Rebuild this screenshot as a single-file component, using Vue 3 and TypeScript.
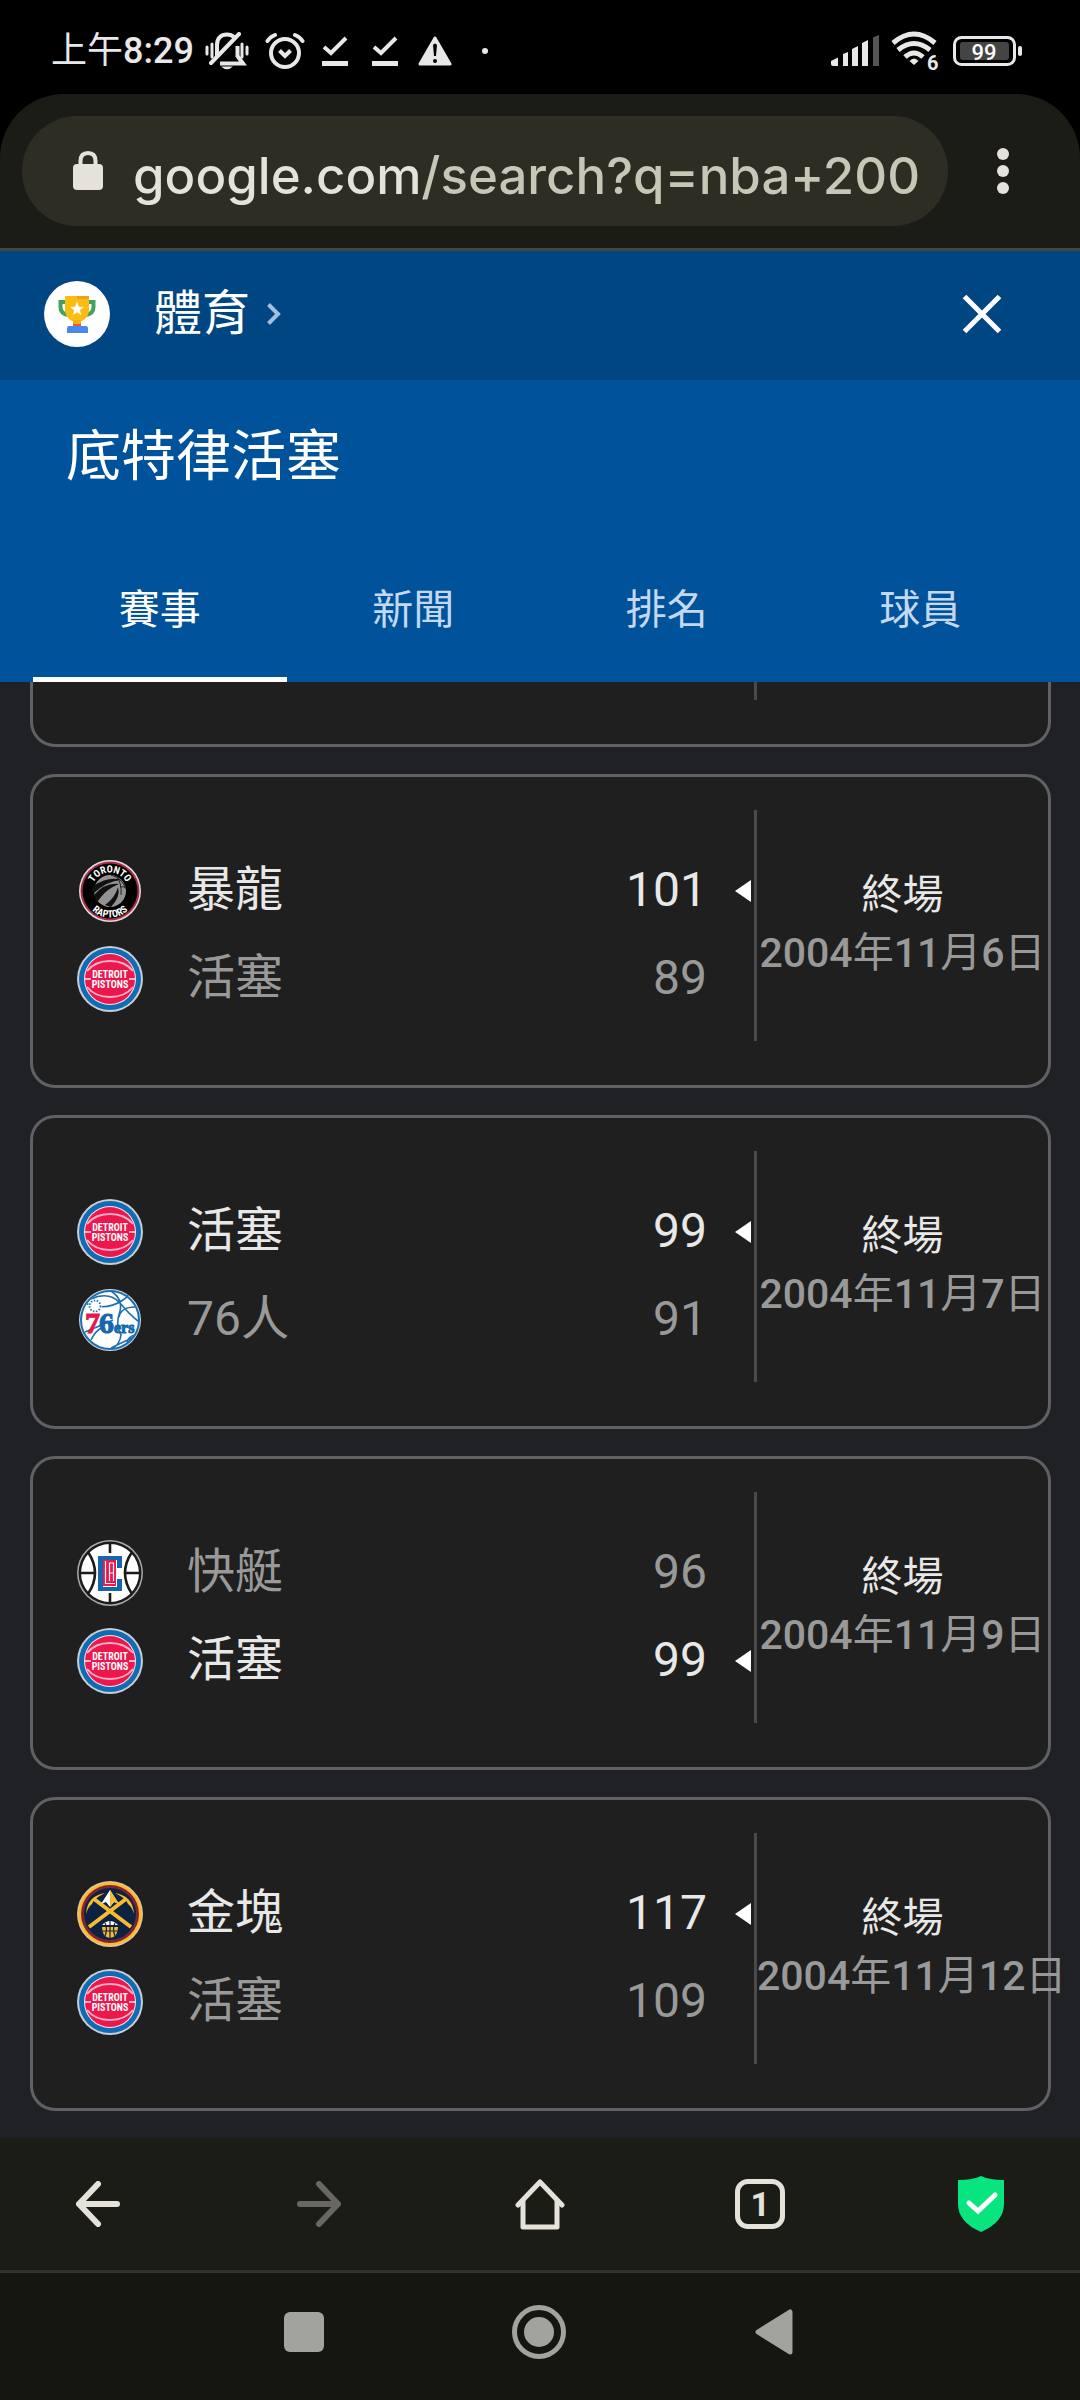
<script setup lang="ts">
import { ref } from 'vue'

type TeamId = 'raptors' | 'pistons' | 'sixers' | 'clippers' | 'nuggets'

interface Side {
  team: TeamId
  name: string
  score: number
}

interface Match {
  sides: Side[]
  status: string
  date: string
}

const url = ref('google.com/search?q=nba+200')
const tabs = ['賽事', '新聞', '排名', '球員']
const activeTab = ref(0)

const matches: Match[] = [
  {
    sides: [
      { team: 'raptors', name: '暴龍', score: 101 },
      { team: 'pistons', name: '活塞', score: 89 },
    ],
    status: '終場',
    date: '2004年11月6日',
  },
  {
    sides: [
      { team: 'pistons', name: '活塞', score: 99 },
      { team: 'sixers', name: '76人', score: 91 },
    ],
    status: '終場',
    date: '2004年11月7日',
  },
  {
    sides: [
      { team: 'clippers', name: '快艇', score: 96 },
      { team: 'pistons', name: '活塞', score: 99 },
    ],
    status: '終場',
    date: '2004年11月9日',
  },
  {
    sides: [
      { team: 'nuggets', name: '金塊', score: 117 },
      { team: 'pistons', name: '活塞', score: 109 },
    ],
    status: '終場',
    date: '2004年11月12日',
  },
]

const isWinner = (match: Match, side: Side): boolean =>
  match.sides.every((other) => other.score <= side.score)

// Splits a date into runs of digits and runs of characters.
const dateParts = (date: string): string[] => date.match(/\d+|\D+/g) ?? []
const isNumber = (part: string): boolean => /^\d/.test(part)
</script>

<template>
  <div class="screen">
    <header class="status">
      <span class="clock">上午<span class="clock-digits">8:29</span></span>
      <span class="status-slot wide">
        <svg width="44" height="38" viewBox="0 0 44 38" fill="none" stroke="#e8e8e8">
          <path d="M2 15v7M7 12v13M37 12v13M42 15v7" stroke-width="3" stroke-linecap="round" />
          <path d="M12 24V13C12 6 16 2.500 22 2.500C25 2.500 27 3.200 29 5M32.500 14V24L38 31.500H15" stroke-width="4" />
          <path d="M6 31L34 2" stroke-width="4" stroke-linecap="round" />
          <path d="M16 34.500H28Q22 40 16 34.500Z" fill="#e8e8e8" stroke="none" />
        </svg>
      </span>
      <span class="status-slot">
        <svg width="40" height="38" viewBox="0 0 40 38" fill="none" stroke="#e8e8e8" stroke-width="4">
          <circle cx="20" cy="21" r="14" />
          <path d="M2.500 9Q5 5 10 3M37.500 9Q35 5 30 3" stroke-linecap="round" />
          <path d="M14.500 18.500L20 24L25.500 18.500" />
        </svg>
      </span>
      <span v-for="n in 2" :key="n" class="status-slot">
        <svg width="26" height="30" viewBox="0 0 26 30" fill="none" stroke="#e8e8e8">
          <path d="M2 11L9 17L24 2" stroke-width="4" />
          <path d="M0 27.500H26" stroke-width="5" />
        </svg>
      </span>
      <span class="status-slot">
        <svg width="34" height="30" viewBox="0 0 34 30">
          <path d="M17 2L32 28H2Z" fill="#e8e8e8" stroke="#e8e8e8" stroke-width="3" stroke-linejoin="round" />
          <path d="M15 9Q17 6 19 9L18 20H16Z" fill="#000" />
          <circle cx="17" cy="25" r="2" fill="#000" />
        </svg>
      </span>
      <span class="status-slot">
        <svg width="6" height="6" viewBox="0 0 6 6"><circle cx="3" cy="3" r="3" fill="#e8e8e8" /></svg>
      </span>
      <span class="status-right">
        <svg width="48" height="32" viewBox="0 0 48 32" fill="#e8e8e8">
          <path d="M0 26L7 22.500V31H2Q0 31 0 29Z" />
          <path d="M12 19L17 17V31H12Z" />
          <path d="M21 14L27 11V31H21Z" />
          <path d="M31 8L37 5V31H31Z" />
          <path d="M42 2.500L48 0V31H42Z" fill="#555" />
        </svg>
        <svg width="50" height="56" viewBox="0 -8 50 56" fill="none" stroke="#e8e8e8" stroke-width="5">
          <path d="M2 12Q23 -6 44 12" />
          <path d="M7 19Q23 6 39 19" />
          <path d="M14 26Q23 18 32 26" />
          <path d="M23 34L18.500 30Q23 25 27.500 30Z" fill="#e8e8e8" stroke="none" />
          <circle cx="42" cy="34" r="8" fill="#000" stroke="none" />
          <text x="36" y="39" class="wifi-text">6</text>
        </svg>
        <svg width="69" height="30" viewBox="0 0 69 30">
          <rect x="1.500" y="1.500" width="60" height="27" rx="7" fill="none" stroke="#e8e8e8" stroke-width="3" />
          <rect x="7" y="6" width="49" height="18" rx="3" fill="#444" />
          <rect x="65" y="10" width="4" height="10" rx="2" fill="#e8e8e8" />
          <text x="31" y="24" text-anchor="middle" class="battery-text">99</text>
        </svg>
      </span>
    </header>

    <div class="browser">
      <label class="omnibox">
        <svg width="30" height="40" viewBox="0 0 30 40">
          <path d="M7.500 15V10Q7.500 2 15 2Q22.500 2 22.500 10V15" fill="none" stroke="#e4e2d9" stroke-width="4" />
          <rect y="13" width="30" height="26" rx="4" fill="#e4e2d9" />
        </svg>
        <input v-model="url" class="url" type="text" aria-label="網址" />
      </label>
      <button class="menu" type="button" aria-label="選單">
        <svg width="12" height="46" viewBox="0 0 12 46" fill="#e4e2d9">
          <circle cx="6" cy="6" r="6" />
          <circle cx="6" cy="23" r="6" />
          <circle cx="6" cy="40" r="6" />
        </svg>
      </button>
    </div>

    <div class="sports-bar">
      <svg width="66" height="66" viewBox="0 0 66 66">
        <circle cx="33" cy="33" r="33" fill="#fff" />
        <path d="M22 21H16.500V26Q16.500 32.500 24 34M44 21H49.500V26Q49.500 32.500 42 34" fill="none" stroke="#41a45c" stroke-width="4" />
        <path d="M21 15H45V29Q45 36 38 40H28Q21 36 21 29Z" fill="#fbbc13" />
        <path d="M33 15H45V18H33Z" fill="#f4a010" />
        <path d="M29 39H37V46H29Z" fill="#fbab10" />
        <path d="M29 43H37V46H29Z" fill="#ea5a35" />
        <path d="M25 45H42Q44 45 44 48V52H23V48Q23 45 25 45Z" fill="#4a88ef" />
        <path d="M33 20.500L34.900 25.800L39.700 25.900L35.900 29.200L37.200 34L33 31.300L28.800 34L30.100 29.200L26.300 25.900L31.100 25.800Z" fill="#fff" />
      </svg>
      <a class="sports-link" href="#">
        體育
        <svg width="16" height="24" viewBox="0 0 16 24" fill="none" stroke="#a3bfdc" stroke-width="4">
          <path d="M2.500 2.500L12 12L2.500 21.500" />
        </svg>
      </a>
      <button class="close" type="button" aria-label="關閉">
        <svg width="40" height="40" viewBox="0 0 40 40" stroke="#fff" stroke-width="5">
          <path d="M2.500 2.500L37.500 37.500M37.500 2.500L2.500 37.500" />
        </svg>
      </button>
    </div>

    <div class="team-head">
      <h1>底特律活塞</h1>
      <nav class="tabs" role="tablist">
        <button
          v-for="(tab, i) in tabs"
          :key="tab"
          type="button"
          role="tab"
          :aria-selected="i === activeTab"
          :class="['tab', { active: i === activeTab }]"
          @click="activeTab = i"
        >
          {{ tab }}
        </button>
      </nav>
    </div>

    <main class="list">
      <div class="card cut">
        <div class="sides"></div>
        <div class="info"></div>
      </div>

      <article v-for="match in matches" :key="match.date" class="card">
        <div class="sides">
          <div
            v-for="side in match.sides"
            :key="side.team"
            :class="['side', { winner: isWinner(match, side) }]"
          >
            <svg v-if="side.team === 'pistons'" width="66" height="66" viewBox="0 0 66 66">
              <circle cx="33" cy="33" r="33" fill="#c9ced2" />
              <circle cx="33" cy="33" r="31" fill="#0f6bb3" />
              <circle cx="33" cy="33" r="26" fill="#f0e8f0" />
              <circle cx="33" cy="33" r="25" fill="#ed174c" />
              <path d="M10 25Q18 15 33 15Q48 15 56 25M10 41Q18 51 33 51Q48 51 56 41" fill="none" stroke="#f7b5c6" stroke-width="2" />
              <path d="M8 33H14M52 33H58" stroke="#f7b5c6" stroke-width="2" />
              <text x="33" y="32" class="mark pistons-text">DETROIT</text>
              <text x="33" y="42" class="mark pistons-text">PISTONS</text>
            </svg>

            <svg v-else-if="side.team === 'raptors'" width="66" height="66" viewBox="0 0 66 66">
              <circle cx="33" cy="33" r="31" fill="#e3dcde" />
              <circle cx="33" cy="33" r="29.500" fill="#a8304a" />
              <circle cx="33" cy="33" r="27.500" fill="#000" />
              <circle cx="33" cy="33" r="16" fill="#929292" />
              <path d="M16 28Q32 18 44 22Q30 23 17 35L15 33ZM17 37Q28 24 42 26Q30 31 24 39Q20 45 19 44ZM28 47Q38 40 41 29Q44 38 34 49Z" fill="#111" />
              <path d="M40 19Q45 26 44 37M34 17Q45 20 49 31M43 29Q47 28 49 30" fill="none" stroke="#222" stroke-width="1" />
              <path id="raptors-top" d="M14.500 33A18.500 18.500 0 0 1 51.500 33" fill="none" />
              <path id="raptors-bottom" d="M6.500 33A26.500 26.500 0 0 0 59.500 33" fill="none" />
              <text class="mark raptors-text"><textPath href="#raptors-top" startOffset="50%">TORONTO</textPath></text>
              <text class="mark raptors-text"><textPath href="#raptors-bottom" startOffset="50%">RAPTORS</textPath></text>
            </svg>

            <svg v-else-if="side.team === 'sixers'" width="66" height="66" viewBox="0 0 66 66">
              <circle cx="33" cy="33" r="31" fill="#d5dce2" />
              <circle cx="33" cy="33" r="29" fill="#fff" stroke="#1c6fb0" stroke-width="2" />
              <path d="M14 12Q32 4 43 16Q53 28 61 34M10 17Q30 24 46 13Q52 9 50 8M34 4Q46 12 43 24Q38 38 44 48Q43 57 35 62M58 20Q44 20 42 30M8 45Q25 38 36 33M14 53Q18 44 26 40M34 61Q44 56 55 51M58 48Q52 49 50 55" fill="none" stroke="#1c6fb0" stroke-width="1.600" />
              <circle cx="18" cy="19" r="7" fill="#fff" />
              <circle cx="18" cy="19" r="5.500" fill="none" stroke="#1c6fb0" stroke-width="1.800" stroke-dasharray="1.500 1.500" />
              <text x="8" y="46" class="sixers-text red">7</text>
              <text x="22" y="46" class="sixers-text">6</text>
              <text x="37" y="46" class="sixers-text small">ers</text>
            </svg>

            <svg v-else-if="side.team === 'clippers'" width="66" height="66" viewBox="0 0 66 66">
              <circle cx="33" cy="33" r="33" fill="#a9abad" />
              <circle cx="33" cy="33" r="31.500" fill="#1b1b1b" />
              <circle cx="33" cy="33" r="29" fill="#fff" />
              <path d="M33 3V13M33 53V63M4 33H18M48 33H62M11 12Q25 33 11 54M55 12Q41 33 55 54" fill="none" stroke="#1b1b1b" stroke-width="2.600" />
              <path d="M45 28V16H21V51H45V39H40V47H26V20H40V28Z" fill="#1467ae" />
              <path d="M26 20H39V46H26Z" fill="#ed174c" />
              <path d="M28.500 21V43.500H38M32.500 41V23H36.500V41M32.500 33H36.500" fill="none" stroke="#fff" stroke-width="1.200" />
            </svg>

            <svg v-else width="66" height="66" viewBox="0 0 66 66">
              <circle cx="33" cy="33" r="33" fill="#e0c899" />
              <circle cx="33" cy="33" r="31.500" fill="#fdb927" />
              <circle cx="33" cy="33" r="29" fill="#7d2434" />
              <circle cx="33" cy="33" r="26" fill="#0d2240" />
              <path d="M12 46L49 18M54 46L17 18" stroke="#f4bb33" stroke-width="4" />
              <path d="M9 33Q10 15 28 12Q16 18 15 23Q11 26 9 33ZM57 33Q56 15 38 12Q50 18 51 23Q55 26 57 33Z" fill="#f4bb33" />
              <path d="M33 9L24 23L29 21L33 26L37 21L42 23Z" fill="#fff" />
              <path d="M33 9V26L37 21L42 23Z" fill="#f4bb33" />
              <path d="M25 44Q33 36 41 44Z" fill="#fff" />
              <path d="M25 46H41Q41 56 33 57Q25 56 25 46Z" fill="#f4bb33" />
              <path d="M33 39V57M25 50H41M28 42Q31 48 28 55M38 42Q35 48 38 55" fill="none" stroke="#0d2240" stroke-width="1.200" />
            </svg>

            <span class="name">{{ side.name }}</span>
            <span class="score">{{ side.score }}</span>
            <svg class="arrow" width="16" height="22" viewBox="0 0 16 22">
              <path v-if="isWinner(match, side)" d="M16 0V22L0 11Z" fill="#fff" />
            </svg>
          </div>
        </div>
        <div class="info">
          <span class="result">{{ match.status }}</span>
          <time class="date"
            ><span
              v-for="(part, i) in dateParts(match.date)"
              :key="i"
              :class="{ digits: isNumber(part) }"
              >{{ part }}</span
            ></time
          >
        </div>
      </article>
    </main>

    <nav class="toolbar">
      <button type="button" aria-label="上一頁">
        <svg width="44" height="46" viewBox="0 0 44 46" fill="none" stroke="#e4e2d9" stroke-width="6" stroke-linecap="round" stroke-linejoin="round">
          <path d="M22 3L3 23L22 43M3 23H41" />
        </svg>
      </button>
      <button type="button" aria-label="下一頁" disabled>
        <svg width="44" height="46" viewBox="0 0 44 46" fill="none" stroke="#686761" stroke-width="6" stroke-linecap="round" stroke-linejoin="round">
          <path d="M22 3L41 23L22 43M41 23H3" />
        </svg>
      </button>
      <button type="button" aria-label="首頁">
        <svg width="50" height="52" viewBox="0 0 50 52" fill="none" stroke="#e4e2d9" stroke-width="5" stroke-linecap="round" stroke-linejoin="round">
          <path d="M3 27L25 4L47 27" />
          <path d="M8 23V49H42V23" />
        </svg>
      </button>
      <button type="button" aria-label="分頁" class="tab-count"><span>1</span></button>
      <button type="button" aria-label="安全">
        <svg width="48" height="56" viewBox="0 0 48 56">
          <path d="M24 0Q32 4 47 4V28Q47 46 24 56Q1 46 1 28V4Q16 4 24 0Z" fill="#08e57f" />
          <path d="M12 27L21 35L38 19" fill="none" stroke="#fff" stroke-width="5" stroke-linecap="round" />
        </svg>
      </button>
    </nav>

    <nav class="system-nav">
      <button type="button" aria-label="最近使用">
        <svg width="40" height="40" viewBox="0 0 40 40"><rect width="40" height="40" rx="6" fill="#a2a29f" /></svg>
      </button>
      <button type="button" aria-label="主畫面">
        <svg width="54" height="54" viewBox="0 0 54 54">
          <circle cx="27" cy="27" r="24.500" fill="none" stroke="#a2a29f" stroke-width="5" />
          <circle cx="27" cy="27" r="15" fill="#a2a29f" />
        </svg>
      </button>
      <button type="button" aria-label="返回">
        <svg width="38" height="46" viewBox="0 0 38 46">
          <path d="M3 23L35 3V43Z" fill="#a2a29f" stroke="#a2a29f" stroke-width="5" stroke-linejoin="round" />
        </svg>
      </button>
    </nav>
  </div>
</template>

<style>
body {
  margin: 0;
  background: #000;
}
</style>

<style scoped>
.screen {
  display: flex;
  flex-direction: column;
  min-height: 100vh;
  overflow: hidden;
  background: #202124;
  color: #e8e8e8;
  font-family: Roboto, 'Noto Sans CJK TC', sans-serif;
}

svg {
  display: block;
  flex: none;
}

button {
  display: flex;
  align-items: center;
  justify-content: center;
  padding: 0;
  border: 0;
  background: none;
  color: inherit;
  font: inherit;
}

.status {
  display: flex;
  align-items: center;
  box-sizing: border-box;
  height: 94px;
  padding: 8px 58px 0 51px;
  background: #000;
}

.clock {
  font-size: 36px;
  line-height: 48px;
  white-space: nowrap;
}

.clock-digits {
  font-weight: 500;
}

.status-slot {
  display: flex;
  flex: none;
  justify-content: center;
  width: 50px;
}

.status-slot.wide {
  width: 66px;
}

.status-right {
  display: flex;
  align-items: center;
  gap: 12px;
  margin-left: auto;
}

.wifi-text {
  fill: #e8e8e8;
  stroke: none;
  font-size: 20px;
  font-weight: 700;
}

.battery-text {
  fill: #fff;
  font-size: 22px;
  font-weight: 500;
}

.browser {
  position: relative;
  display: flex;
  align-items: center;
  box-sizing: border-box;
  height: 157px;
  padding-left: 22px;
  border-bottom: 3px solid #45453c;
  background: #000;
  isolation: isolate;
}

.browser::before {
  content: '';
  position: absolute;
  inset: 0;
  z-index: -1;
  border-radius: 64px 64px 0 0;
  background: #1c1c17;
}

.omnibox {
  display: flex;
  flex: 1;
  align-items: center;
  gap: 30px;
  min-width: 0;
  box-sizing: border-box;
  height: 110px;
  padding: 0 22px 0 51px;
  border-radius: 55px;
  background: #2e2d23;
}

/* The host name is brighter than the rest of the address. */
.url {
  flex: 1;
  min-width: 0;
  height: 72px;
  padding: 8px 0 0;
  border: 0;
  outline: 0;
  background: linear-gradient(90deg, #e4e2d9 291px, #c8c6b7 291px);
  background-clip: text;
  -webkit-background-clip: text;
  color: transparent;
  font-family: Inter, sans-serif;
  font-size: 51px;
  font-weight: 500;
}

.menu {
  width: 132px;
  height: 110px;
  padding-right: 22px;
}

.sports-bar {
  display: flex;
  align-items: center;
  box-sizing: border-box;
  height: 129px;
  padding: 0 43px 3px 44px;
  background: #004682;
}

.sports-link {
  display: flex;
  align-items: center;
  gap: 16px;
  margin-left: 44px;
  color: #fff;
  font-size: 48px;
  line-height: 72px;
  text-decoration: none;
}

.close {
  width: 110px;
  height: 110px;
  margin-left: auto;
}

.team-head {
  padding: 36px 33px 0;
  background: #00529b;
  color: #fff;
}

h1 {
  margin: 0 33px;
  font-size: 55px;
  font-weight: 400;
  line-height: 80px;
}

.tabs {
  display: flex;
  margin-top: 42px;
}

.tab {
  flex: 1;
  box-sizing: border-box;
  height: 144px;
  border-top: 5px solid transparent;
  border-bottom: 5px solid transparent;
  color: #c3d9f1;
  font-size: 41px;
  line-height: 60px;
}

.tab.active {
  border-bottom-color: #fff;
  color: #fff;
}

.list {
  display: flex;
  flex: 1;
  flex-direction: column;
  gap: 27px;
  padding: 0 29px 27px 30px;
}

.card {
  display: flex;
  border: 3px solid #5f6165;
  border-radius: 25px;
  background: #1f1f1f;
}

.card.cut {
  border-top: 0;
  border-top-left-radius: 0;
  border-top-right-radius: 0;
}

.sides {
  flex: 1;
  min-width: 0;
  padding: 70px 3px 62px 44px;
}

.cut .sides {
  padding: 0;
}

.side {
  display: flex;
  align-items: center;
  height: 88px;
  color: #999;
  font-size: 48px;
  line-height: 72px;
}

.side.winner {
  color: #e8e8e8;
}

.name {
  flex: 1;
  padding: 0 0 2px 44px;
}

.score {
  padding: 0 28px 2px 0;
}

.info {
  display: flex;
  flex-direction: column;
  align-items: center;
  box-sizing: border-box;
  width: 294px;
  margin: 33px 0 44px;
  padding-top: 56px;
  border-left: 3px solid #4a4a4a;
  font-size: 41px;
  line-height: 58px;
  white-space: nowrap;
}

.cut .info {
  height: 18px;
  margin-top: 0;
  padding: 0;
}

.date {
  align-self: flex-start;
  min-width: 100%;
  color: #999;
  text-align: center;
}

.digits {
  font-weight: 500;
}

.mark {
  fill: #fff;
  text-anchor: middle;
  font-family: 'Liberation Sans Narrow', 'Roboto Condensed', Roboto, sans-serif;
  font-weight: 700;
}

.pistons-text {
  font-size: 10px;
}

.raptors-text {
  font-size: 10px;
}

.sixers-text {
  fill: #1467ae;
  stroke: #1467ae;
  stroke-width: 1;
  font-family: 'Liberation Serif', serif;
  font-size: 30px;
  font-weight: 700;
}

.sixers-text.red {
  fill: #e5174c;
  stroke: #e5174c;
}

.sixers-text.small {
  font-size: 16px;
}

.toolbar {
  display: flex;
  align-items: center;
  justify-content: space-between;
  box-sizing: border-box;
  height: 135px;
  padding: 0 44px 0 43px;
  border-bottom: 3px solid #33332e;
  background: #1c1c17;
}

.toolbar button {
  width: 110px;
  height: 110px;
}

.tab-count span {
  box-sizing: border-box;
  width: 50px;
  height: 50px;
  border: 5px solid #e4e2d9;
  border-radius: 13px;
  color: #e4e2d9;
  font-size: 34px;
  font-weight: 700;
  line-height: 40px;
}

.system-nav {
  display: flex;
  justify-content: center;
  box-sizing: border-box;
  height: 127px;
  padding-right: 3px;
  background: #161611;
}

.system-nav button {
  width: 235px;
  height: 118px;
}
</style>
